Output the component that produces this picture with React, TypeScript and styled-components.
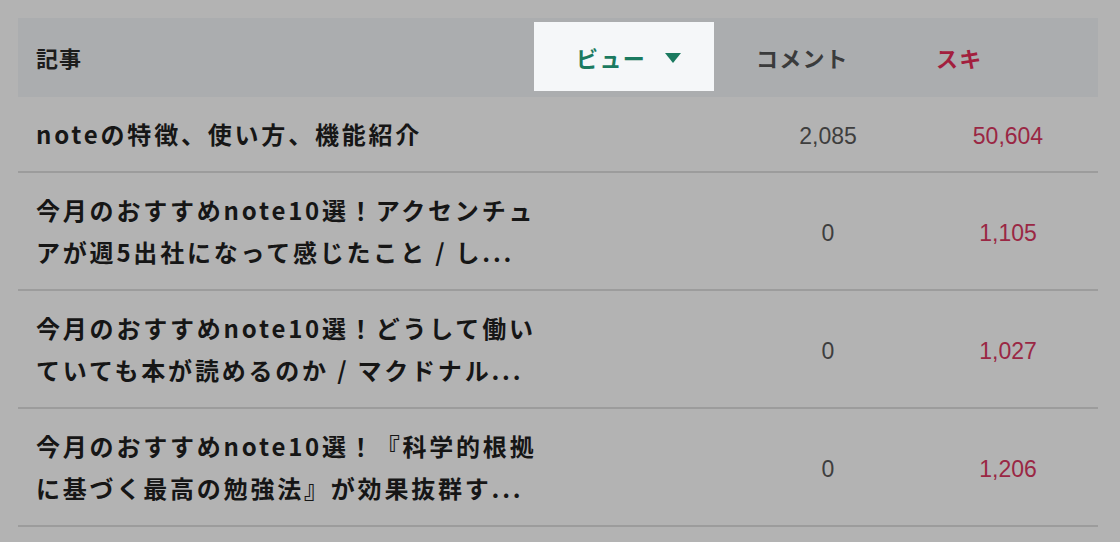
import React from "react";
import styled, { createGlobalStyle } from "styled-components";

const GlobalStyle = createGlobalStyle`
  html, body {
    margin: 0;
    padding: 0;
    background: #b3b3b3;
  }
  body {
    font-family: "Noto Sans CJK JP", "Noto Sans", sans-serif;
  }
`;

type Article = {
  title: string;
  comments: string;
  likes: string;
};

// titles are shown as they appear in the list, already shortened
const articles: Article[] = [
  { title: "noteの特徴、使い方、機能紹介", comments: "2,085", likes: "50,604" },
  {
    title: "今月のおすすめnote10選！アクセンチュアが週5出社になって感じたこと / し...",
    comments: "0",
    likes: "1,105",
  },
  {
    title: "今月のおすすめnote10選！どうして働いていても本が読めるのか / マクドナル...",
    comments: "0",
    likes: "1,027",
  },
  {
    title: "今月のおすすめnote10選！『科学的根拠に基づく最高の勉強法』が効果抜群す...",
    comments: "0",
    likes: "1,206",
  },
];

export default function App() {
  return (
    <>
      <GlobalStyle />
      <Page>
        <Table>
          <HeaderRow>
            <HeadTitle>記事</HeadTitle>
            <SortButton>
              ビュー
              <svg width="16" height="10" viewBox="0 0 16 10">
                <path d="M0 0 H16 L8 10 Z" fill="#1b7a60" />
              </svg>
            </SortButton>
            <HeadLabel>コメント</HeadLabel>
            <HeadLabel $tone="like">スキ</HeadLabel>
          </HeaderRow>
          {articles.map((a) => (
            <Row key={a.title}>
              <TitleCell>
                <Title>{a.title}</Title>
              </TitleCell>
              <NumCell>{a.comments}</NumCell>
              <NumCell $tone="like">{a.likes}</NumCell>
            </Row>
          ))}
        </Table>
      </Page>
    </>
  );
}

const Page = styled.div`
  padding: 18px 22px 0 18px;
  min-height: 100vh;
  box-sizing: border-box;
`;

const Table = styled.div`
  width: 1080px;
  display: flex;
  flex-direction: column;
`;

const HeaderRow = styled.div`
  display: grid;
  grid-template-columns: 1fr 180px 180px 180px;
  align-items: center;
  height: 79px;
  padding: 4px 24px 6px 18px;
  box-sizing: border-box;
  background: #abadaf;
`;

const HeadTitle = styled.div`
  font-size: 22px;
  font-weight: 700;
  letter-spacing: 1px;
  color: #1c1c1c;
`;

const SortButton = styled.div`
  height: 69px;
  display: flex;
  align-items: center;
  gap: 19px;
  padding-left: 42px;
  background: #f5f7f9;
  color: #1b7a60;
  font-size: 22px;
  font-weight: 700;
  letter-spacing: 1.4px;
  svg {
    margin-top: 2px;
  }
`;

const HeadLabel = styled.div<{ $tone?: "like" }>`
  padding-left: 42px;
  font-size: 22px;
  font-weight: 700;
  letter-spacing: 1.2px;
  color: ${(p) => (p.$tone === "like" ? "#a21f3e" : "#3a3b3c")};
`;

const Row = styled.div`
  display: grid;
  grid-template-columns: 1fr 180px 180px;
  align-items: center;
  padding: 16px 0;
  border-bottom: 2px solid #9c9c9c;
`;

const TitleCell = styled.div`
  padding-left: 18px;
`;

const Title = styled.div`
  width: 512px;
  font-size: 24px;
  font-weight: 700;
  line-height: 42px;
  letter-spacing: 2.8px;
  color: #161616;
  display: -webkit-box;
  -webkit-box-orient: vertical;
  -webkit-line-clamp: 2;
  overflow: hidden;
`;

const NumCell = styled.div<{ $tone?: "like" }>`
  padding-top: 4px;
  text-align: center;
  font-family: "Liberation Sans", Arial, sans-serif;
  font-size: 23px;
  color: ${(p) => (p.$tone === "like" ? "#9a2744" : "#3e3e3e")};
`;
